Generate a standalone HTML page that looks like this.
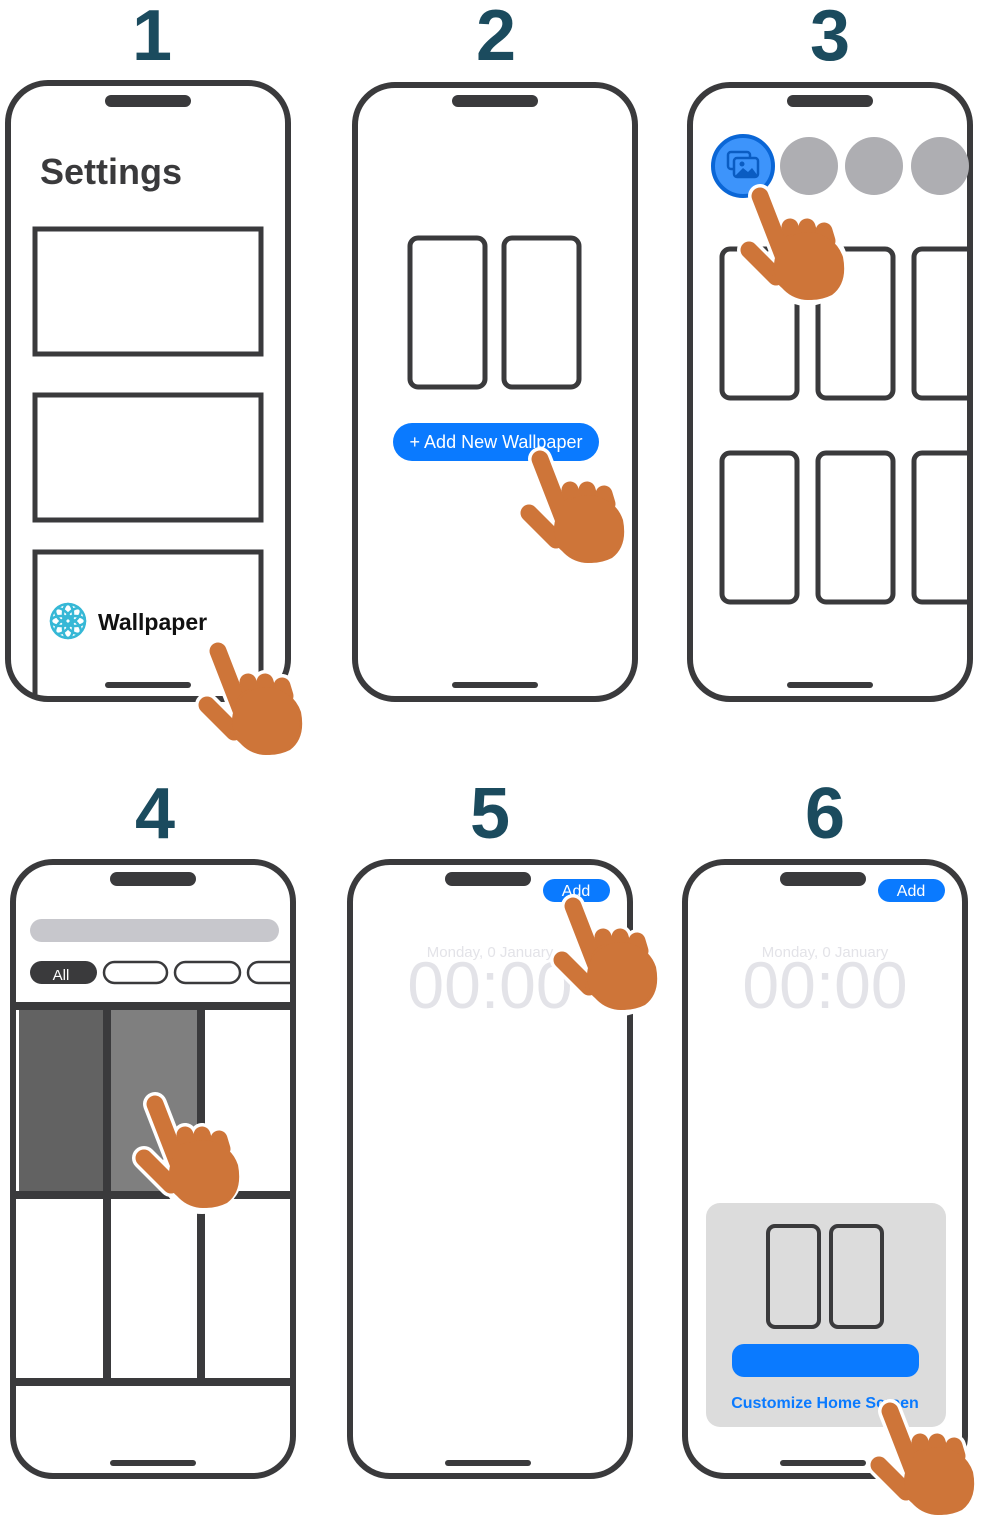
<!DOCTYPE html>
<html><head><meta charset="utf-8"><style>
html,body{margin:0;padding:0;background:#fff;}
svg{display:block;}
text{font-family:"Liberation Sans",sans-serif;}
</style></head><body>
<svg width="982" height="1524" viewBox="0 0 982 1524" xmlns="http://www.w3.org/2000/svg">
<defs>
<g id="hand">
  <g stroke="#fff" stroke-width="24" stroke-linecap="round" fill="none">
    <path d="M28 15 L54 82"/><path d="M58 46 L61 56"/><path d="M75 46 L78 56"/><path d="M92 50 L95 60"/><path d="M17 69 L44 96"/>
  </g>
  <circle cx="75" cy="84" r="41" fill="#fff"/>
  <g stroke="#ce7539" stroke-width="17" stroke-linecap="round" fill="none">
    <path d="M28 15 L54 82"/><path d="M58 46 L61 56"/><path d="M75 46 L78 56"/><path d="M92 50 L95 60"/><path d="M17 69 L44 96"/>
  </g>
  <path d="M46 66 Q52 50 70 54 Q102 50 111 76 Q116 102 100 114 Q84 122 66 117 Q50 110 40 96 Z" fill="#ce7539"/>
  <circle cx="76" cy="85" r="34" fill="#ce7539"/>
</g>
<clipPath id="c3"><rect x="691" y="85" width="278" height="614" rx="38"/></clipPath>
<clipPath id="c4"><rect x="15" y="863" width="278" height="612" rx="38"/></clipPath>
</defs>

<g fill="#1b4b5e" font-weight="bold" font-size="72" text-anchor="middle">
  <text x="152" y="60">1</text><text x="496" y="60">2</text><text x="830" y="60">3</text>
  <text x="155" y="838">4</text><text x="490" y="838">5</text><text x="825" y="838">6</text>
</g>

<g fill="none" stroke="#3a3a3c" stroke-width="6">
  <rect x="8" y="83" width="280" height="616" rx="40"/>
  <rect x="35" y="229" width="226" height="125" stroke-width="5"/>
  <rect x="35" y="395" width="226" height="125" stroke-width="5"/>
  <path d="M35 697 V552 H261 V697" stroke-width="5"/>
  <rect x="355" y="85" width="280" height="614" rx="40"/>
  <rect x="410" y="238" width="75" height="149" rx="8" stroke-width="5"/>
  <rect x="504" y="238" width="75" height="149" rx="8" stroke-width="5"/>
  <rect x="690" y="85" width="280" height="614" rx="40"/>
  <g clip-path="url(#c3)" stroke-width="5">
    <rect x="722" y="249" width="75" height="149" rx="8"/>
    <rect x="818" y="249" width="75" height="149" rx="8"/>
    <rect x="914" y="249" width="75" height="149" rx="8"/>
    <rect x="722" y="453" width="75" height="149" rx="8"/>
    <rect x="818" y="453" width="75" height="149" rx="8"/>
    <rect x="914" y="453" width="75" height="149" rx="8"/>
  </g>
  <rect x="350" y="862" width="280" height="614" rx="40"/>
  <rect x="685" y="862" width="280" height="614" rx="40"/>
</g>

<!-- phone 4 -->
<g clip-path="url(#c4)">
  <rect x="19" y="1010" width="84" height="181" fill="#626262"/>
  <rect x="111" y="1010" width="86" height="181" fill="#7f7f7f"/>
  <g fill="none" stroke="#3a3a3c">
    <path d="M12 1006 H296" stroke-width="8"/>
    <path d="M15 1195 H296" stroke-width="8"/>
    <path d="M15 1382 H296" stroke-width="8"/>
    <path d="M107 1006 V1382" stroke-width="8"/>
    <path d="M201 1006 V1382" stroke-width="8"/>
  </g>
  <rect x="30" y="919" width="249" height="23" rx="11.5" fill="#c7c7cc"/>
  <rect x="30" y="961" width="67" height="23" rx="11.5" fill="#3a3a3c"/>
  <text x="61" y="980" fill="#fff" font-size="15" text-anchor="middle">All</text>
  <g fill="none" stroke="#3a3a3c" stroke-width="2.5">
    <rect x="104" y="962" width="63" height="21" rx="10.5"/>
    <rect x="175" y="962" width="65" height="21" rx="10.5"/>
    <rect x="248" y="962" width="65" height="21" rx="10.5"/>
  </g>
</g>
<rect x="13" y="862" width="280" height="614" rx="40" fill="none" stroke="#3a3a3c" stroke-width="6"/>

<g fill="#3a3a3c">
  <rect x="105" y="95" width="86" height="12" rx="6"/><rect x="105" y="682" width="86" height="6" rx="3"/>
  <rect x="452" y="95" width="86" height="12" rx="6"/><rect x="452" y="682" width="86" height="6" rx="3"/>
  <rect x="787" y="95" width="86" height="12" rx="6"/><rect x="787" y="682" width="86" height="6" rx="3"/>
  <rect x="110" y="872" width="86" height="14" rx="7"/><rect x="110" y="1460" width="86" height="6" rx="3"/>
  <rect x="445" y="872" width="86" height="14" rx="7"/><rect x="445" y="1460" width="86" height="6" rx="3"/>
  <rect x="780" y="872" width="86" height="14" rx="7"/><rect x="780" y="1460" width="86" height="6" rx="3"/>
</g>

<text x="40" y="184" font-size="36" font-weight="bold" fill="#3a3a3c">Settings</text>
<g fill="none" stroke="#36b8d6" stroke-width="2.5" transform="translate(68 621)">
  <circle r="17"/>
  <ellipse rx="5" ry="10" transform="rotate(0) translate(0 -7)"/>
  <ellipse rx="5" ry="10" transform="rotate(45) translate(0 -7)"/>
  <ellipse rx="5" ry="10" transform="rotate(90) translate(0 -7)"/>
  <ellipse rx="5" ry="10" transform="rotate(135) translate(0 -7)"/>
  <ellipse rx="5" ry="10" transform="rotate(180) translate(0 -7)"/>
  <ellipse rx="5" ry="10" transform="rotate(225) translate(0 -7)"/>
  <ellipse rx="5" ry="10" transform="rotate(270) translate(0 -7)"/>
  <ellipse rx="5" ry="10" transform="rotate(315) translate(0 -7)"/>
</g>
<text x="98" y="630" font-size="23" font-weight="bold" fill="#111">Wallpaper</text>

<rect x="393" y="423" width="206" height="38" rx="19" fill="#0a7aff"/>
<text x="496" y="448" font-size="18" fill="#fff" text-anchor="middle">+ Add New Wallpaper</text>

<circle cx="743" cy="166" r="30" fill="#3d94fb" stroke="#0a66d6" stroke-width="4"/>
<g fill="none" stroke="#0a5cc2" stroke-width="2.5">
  <rect x="728" y="152" width="22" height="17" rx="3"/>
  <rect x="734" y="158" width="24" height="19" rx="3" fill="#3d94fb"/>
</g>
<circle cx="742" cy="164" r="2.5" fill="#0a5cc2"/>
<path d="M735 176 L743 168 L748 172 L752 168 L758 176 Z" fill="#0a5cc2"/>
<g fill="#aeaeb2">
  <circle cx="809" cy="166" r="29"/><circle cx="874" cy="166" r="29"/>
</g>
<g clip-path="url(#c3)"><circle cx="940" cy="166" r="29" fill="#aeaeb2"/></g>

<rect x="543" y="879" width="67" height="23" rx="11.5" fill="#0a7aff"/>
<text x="576" y="896" font-size="16" fill="#fff" text-anchor="middle">Add</text>
<text x="490" y="957" font-size="15" fill="#e3e3e8" text-anchor="middle">Monday, 0 January</text>
<text x="490" y="1008" font-size="66" fill="#e3e3e8" text-anchor="middle">00:00</text>

<rect x="878" y="879" width="67" height="23" rx="11.5" fill="#0a7aff"/>
<text x="911" y="896" font-size="16" fill="#fff" text-anchor="middle">Add</text>
<text x="825" y="957" font-size="15" fill="#e3e3e8" text-anchor="middle">Monday, 0 January</text>
<text x="825" y="1008" font-size="66" fill="#e3e3e8" text-anchor="middle">00:00</text>
<rect x="706" y="1203" width="240" height="224" rx="14" fill="#dcdcdc"/>
<g fill="none" stroke="#3a3a3c" stroke-width="4">
  <rect x="768" y="1226" width="51" height="101" rx="7"/>
  <rect x="831" y="1226" width="51" height="101" rx="7"/>
</g>
<rect x="732" y="1344" width="187" height="33" rx="12" fill="#0a7aff"/>
<text x="825" y="1408" font-size="16" font-weight="bold" fill="#0a7aff" text-anchor="middle">Customize Home Screen</text>

<use href="#hand" transform="translate(190 636)"/>
<use href="#hand" transform="translate(512 444)"/>
<use href="#hand" transform="translate(732 181)"/>
<use href="#hand" transform="translate(127 1089)"/>
<use href="#hand" transform="translate(545 891)"/>
<use href="#hand" transform="translate(862 1396)"/>
</svg>
</body></html>
